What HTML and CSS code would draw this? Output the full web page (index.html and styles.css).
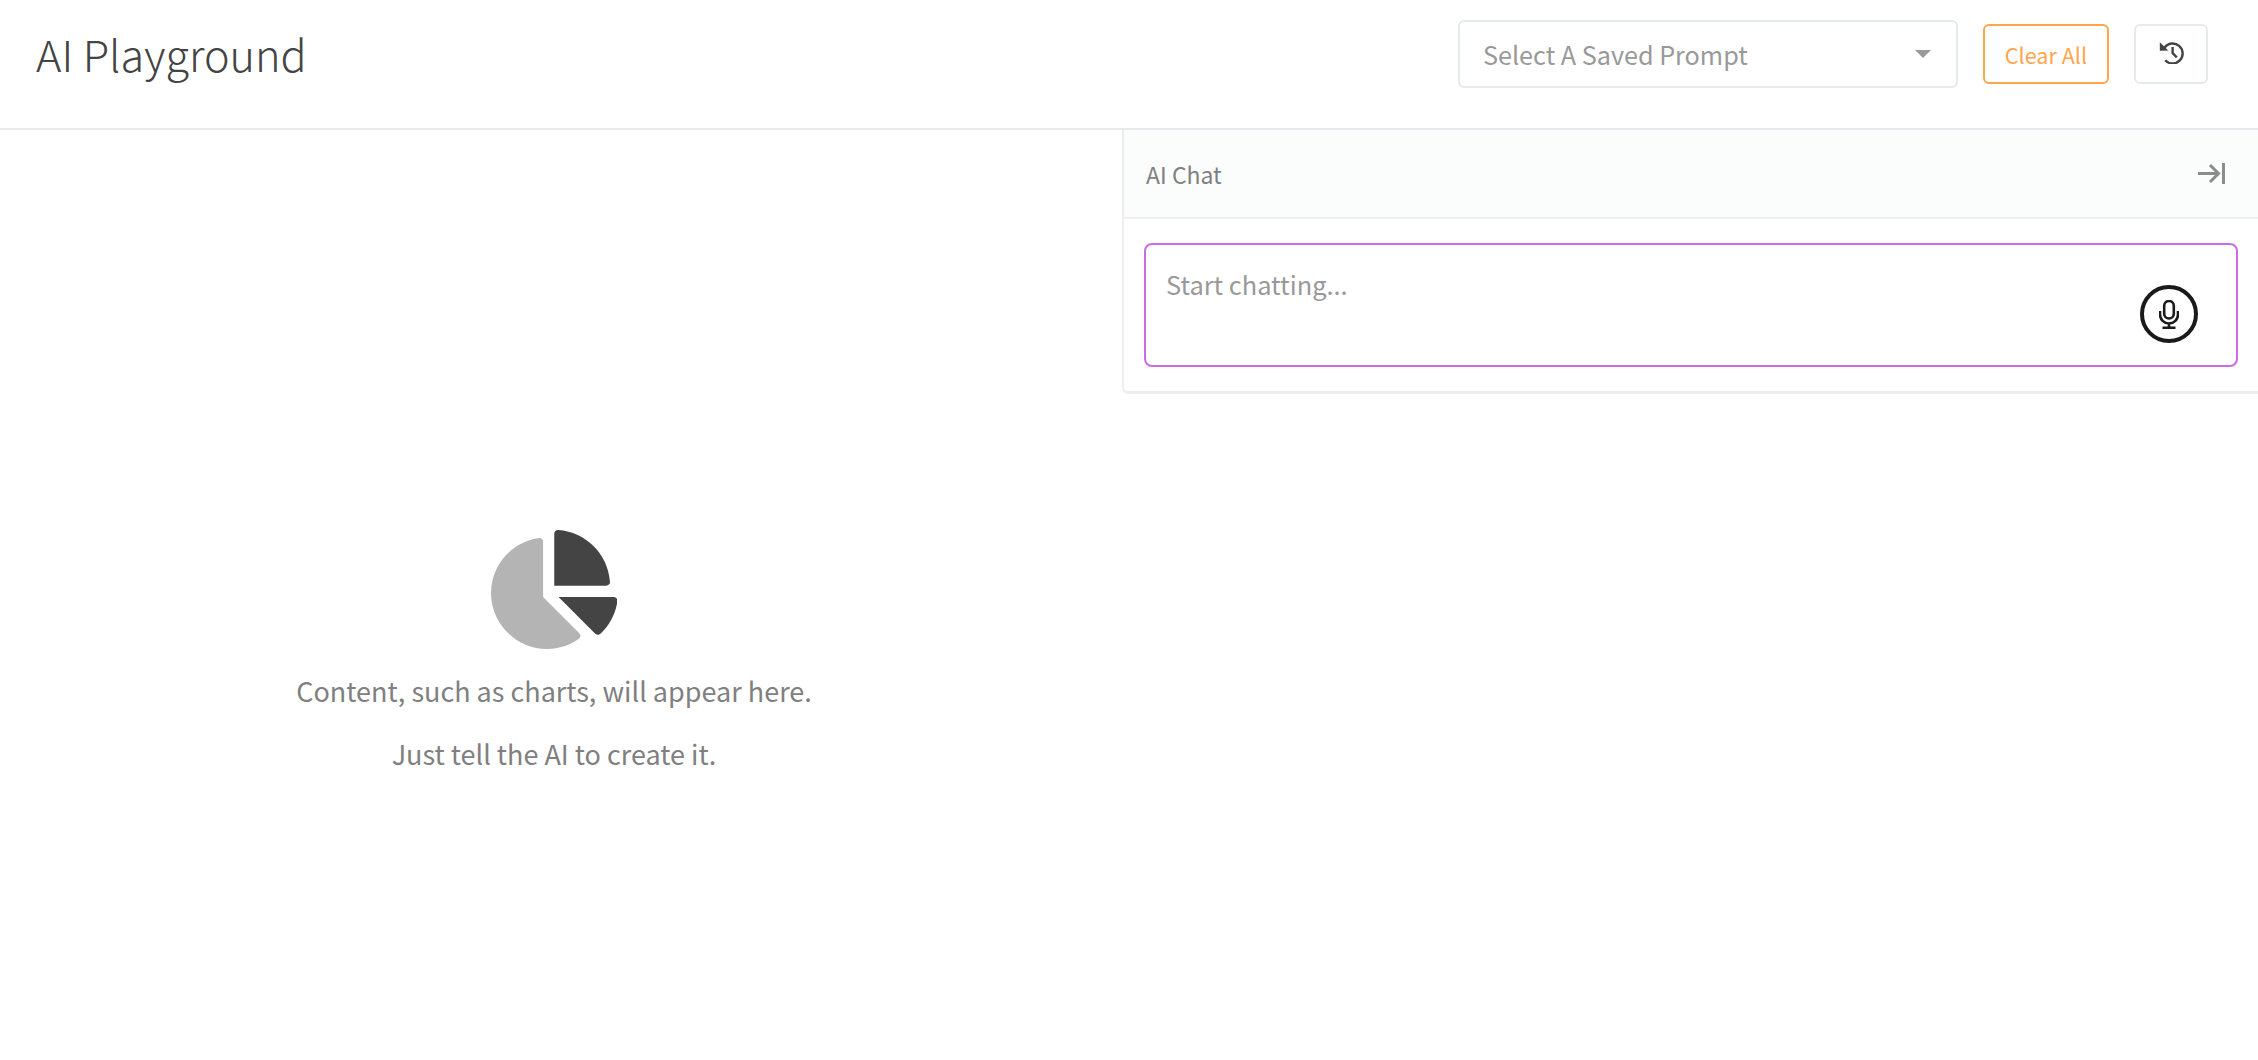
FILE: index.html
```html
<!DOCTYPE html>
<html lang="en">
<head>
<meta charset="utf-8">
<title>AI Playground</title>
<link rel="stylesheet" href="styles.css">
</head>
<body>
<header class="topbar">
  <h1 class="title">AI Playground</h1>
  <div class="actions">
    <div class="select">
      <span class="select-label">Select A Saved Prompt</span>
      <span class="caret"></span>
    </div>
    <button class="btn btn-clear">Clear All</button>
    <button class="btn btn-history" aria-label="History">
      <svg class="history-icon" viewBox="0 0 25 23"><path class="history-stroke" d="M5.6 6.5A10 10 0 1 1 6.2 19.2M13.6 6v6l4.2 4.4"/><path class="history-fill" d="M0.8 1.2 9.3 9.6 0.8 9.8z"/></svg>
    </button>
  </div>
</header>
<main class="workspace">
  <section class="canvas">
    <svg class="pie" viewBox="0 0 544 512">
      <path class="pie-light" d="M224 288V50.71c0-9.55-8.39-17.4-17.84-16.06C86.99 51.49-4.1 155.6.14 280.37 4.5 408.51 114.83 513.59 243.03 511.98c50.4-.63 96.97-16.87 135.26-44.03 7.9-5.6 8.42-17.23 1.57-24.08L224 288z"/>
      <path class="pie-dark" d="M527.79 288H290.5l158.03 158.03c6.04 6.04 15.98 6.53 22.19.68 38.7-36.46 65.32-85.61 73.13-140.86 1.34-9.46-6.51-17.85-16.06-17.85zm-15.83-64.8C503.72 103.74 408.26 8.28 288.8.04 279.68-.59 272 7.1 272 16.24V240h223.77c9.14 0 16.82-7.68 16.19-16.8z"/>
    </svg>
    <p class="hint">Content, such as charts, will appear here.</p>
    <p class="hint">Just tell the AI to create it.</p>
  </section>
  <aside class="chat">
    <div class="chat-head">
      <span class="chat-title">AI Chat</span>
      <svg class="collapse" viewBox="0 0 27 21"><path d="M0 10.5h20M12 2l8.5 8.5L12 19M25.5 0v21"/></svg>
    </div>
    <div class="chat-body">
      <div class="input">
        <span class="placeholder">Start chatting...</span>
        <button class="mic" aria-label="Voice input">
          <svg class="mic-icon" viewBox="0 0 20 29"><rect x="5.2" y="1" width="9.6" height="17.5" rx="4.8"/><path d="M1 11v3.5a9 9 0 0 0 18 0V11M10 23.5v4M3.5 27.8h13"/></svg>
        </button>
      </div>
    </div>
  </aside>
</main>
</body>
</html>
```
FILE: styles.css
```css
* { box-sizing: border-box; }
html, body { margin: 0; height: 100%; }
body {
  background: #fff;
  font-family: "Noto Sans CJK JP", "Noto Sans", sans-serif;
  color: #444;
  overflow: hidden;
}
.topbar {
  height: 130px;
  display: flex;
  align-items: flex-start;
  justify-content: space-between;
  padding: 20px 50px 0 36px;
  border-bottom: 2px solid #e6eaed;
}
.title {
  margin: 7px 0 0;
  font-size: 43.2px;
  font-weight: 300;
  line-height: 52px;
  color: #444;
}
.actions { display: flex; align-items: flex-start; }
.select {
  width: 500px;
  height: 68px;
  margin-right: 25px;
  padding: 0 25px 0 23px;
  display: flex;
  align-items: center;
  justify-content: space-between;
  background: #fff;
  border: 2px solid #e6eaed;
  border-radius: 6px;
}
.select-label { font-size: 25.2px; color: #999; }
.caret {
  width: 0;
  height: 0;
  border-left: 8px solid transparent;
  border-right: 8px solid transparent;
  border-top: 8px solid #999;
}
.btn {
  height: 60px;
  margin-top: 4px;
  padding: 0;
  display: flex;
  align-items: center;
  justify-content: center;
  background: #fff;
  border-radius: 6px;
  font-family: inherit;
}
.btn-clear {
  width: 126px;
  margin-right: 25px;
  border: 2px solid #ffa64d;
  color: #ffa64d;
  font-size: 21.6px;
}
.btn-history {
  width: 74px;
  border: 2px solid #e6eaed;
}
.history-icon { width: 25px; height: 23px; margin-bottom: 4px; }
.history-stroke { fill: none; stroke: #444; stroke-width: 2.4; }
.history-fill { fill: #444; }
.workspace { display: flex; align-items: flex-start; }
.canvas {
  width: 1108px;
  margin-right: 14px;
  padding-top: 400px;
  display: flex;
  flex-direction: column;
  align-items: center;
}
.pie { width: 126.5px; height: 119px; margin-bottom: 21px; }
.pie-light { fill: #b4b4b4; }
.pie-dark { fill: #444; }
.hint {
  margin: 0 0 21px;
  font-size: 27px;
  line-height: 42px;
  color: #808080;
}
.chat {
  flex: 1;
  min-width: 0;
  border-left: 2px solid #eeeeee;
  border-bottom: 3px solid #eeeeee;
  border-bottom-left-radius: 6px;
}
.chat-head {
  height: 89px;
  padding: 0 33px 0 22px;
  display: flex;
  align-items: center;
  justify-content: space-between;
  background: #fbfcfc;
  border-bottom: 2px solid #eeeeee;
}
.chat-title { font-size: 23px; color: #808080; }
.collapse { width: 27px; height: 21px; fill: none; stroke: #8c8c8c; stroke-width: 3; }
.chat-body { padding: 24px 20px 24px 20px; }
.input {
  height: 124px;
  padding: 19px 38px 22px 20px;
  display: flex;
  align-items: flex-start;
  justify-content: space-between;
  border: 2px solid #cb6ce0;
  border-radius: 8px;
}
.placeholder { font-size: 25.4px; line-height: 40px; color: #999; }
.mic {
  width: 58px;
  height: 58px;
  margin-top: 21px;
  padding: 0;
  display: flex;
  align-items: center;
  justify-content: center;
  background: #fff;
  border: 4px solid #1a1a1a;
  border-radius: 50%;
}
.mic-icon { width: 20px; height: 29px; fill: none; stroke: #1a1a1a; stroke-width: 2.6; }
```
